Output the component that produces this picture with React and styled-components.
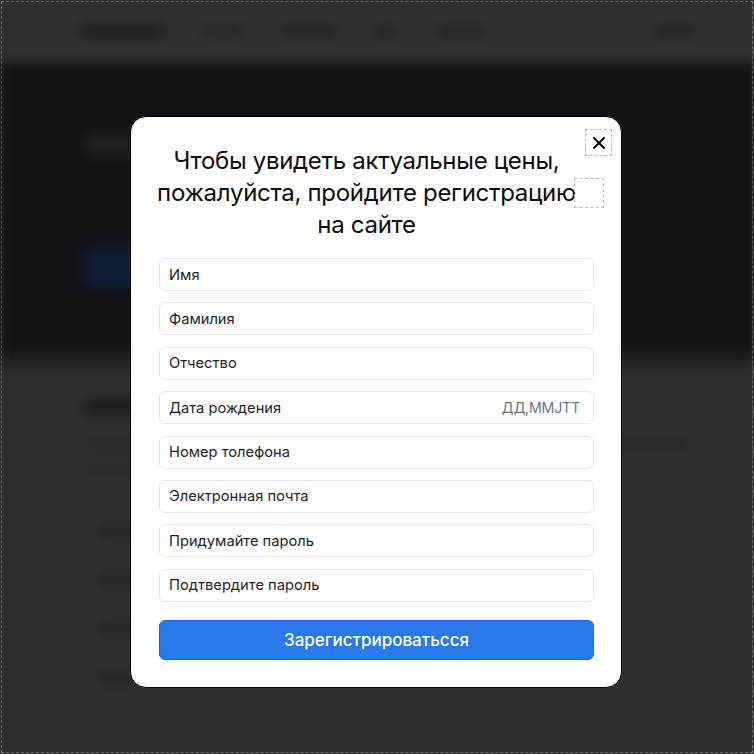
import styled, { createGlobalStyle } from "styled-components";
import { X } from "lucide-react";

const GlobalStyle = createGlobalStyle`
  html, body {
    margin: 0;
    padding: 0;
    background: #2e2e2e;
  }
  * {
    box-sizing: border-box;
  }
`;

const Screen = styled.div`
  position: relative;
  width: 754px;
  height: 754px;
  overflow: hidden;
  font-family: Inter, "Noto Sans", sans-serif;
  background: #2e2e2e;
  outline: 1px dashed #b8b8b8;
  outline-offset: -2px;
`;

const Page = styled.div`
  display: flex;
  flex-direction: column;
  height: 100%;
  filter: blur(6px);
`;

const TopBar = styled.header`
  height: 62px;
  display: flex;
  align-items: center;
  gap: 38px;
  padding: 0 59px 0 80px;
  background: #303030;
`;

const Bar = styled.div`
  width: ${(p) => p.$w}px;
  height: ${(p) => p.$h || 10}px;
  background: ${(p) => p.$c || "#1e1e1e"};
  border-radius: 3px;
  margin-left: ${(p) => (p.$push ? "auto" : "0")};
  margin-top: ${(p) => p.$mt || 0}px;
`;

const Hero = styled.section`
  height: 288px;
  display: flex;
  flex-direction: column;
  gap: 22px;
  padding: 72px 85px 0;
  background: #101216;
`;

const Content = styled.section`
  flex: 1;
  display: flex;
  flex-direction: column;
  padding: 50px 64px 0 85px;
  background: linear-gradient(#141518 0, #2e2e2e 24px);
`;

const Lines = styled.div`
  display: flex;
  flex-direction: column;
  gap: 12px;
  margin: 26px 0 54px;
`;

const List = styled.div`
  display: flex;
  flex-direction: column;
  gap: 39px;
  padding-left: 15px;
`;

const Overlay = styled.div`
  position: absolute;
  inset: 0;
  display: flex;
  justify-content: center;
  align-items: flex-start;
  padding: 116px 2px 0 0;
`;

const Modal = styled.div`
  position: relative;
  width: 492px;
  height: 572px;
  padding: 28px 27px 27px 28px;
  background: #ffffff;
  border: 1px solid #000;
  border-radius: 16px;
  display: flex;
  flex-direction: column;
`;

const Title = styled.h2`
  margin: 0 10px 17px -10px;
  font-size: 24px;
  line-height: 32px;
  font-weight: 400;
  color: #0c0c0c;
  text-align: center;
  letter-spacing: -0.3px;
  white-space: nowrap;
`;

const DashedBox = styled.div`
  position: absolute;
  top: ${(p) => p.$top}px;
  right: ${(p) => p.$right}px;
  width: ${(p) => p.$size}px;
  height: ${(p) => p.$size}px;
  border: 1px dashed #b9b9b9;
  display: flex;
  align-items: center;
  justify-content: center;
  color: #111;
`;

const Fields = styled.div`
  display: flex;
  flex-direction: column;
  gap: 11.4px;
`;

const Field = styled.div`
  height: 33px;
  display: flex;
  align-items: center;
  justify-content: space-between;
  padding: 0 13px 0 9px;
  border: 1px solid #dfe5ef;
  border-radius: 6px;
  background: #fff;
  font-size: 14.7px;
  color: #1f2328;
`;

const Hint = styled.span`
  color: #6b7586;
  font-size: 14.2px;
  letter-spacing: -0.2px;
`;

const Submit = styled.button`
  margin-top: 18px;
  height: 42px;
  width: 100%;
  border: 1px solid #1f69d6;
  border-radius: 6px;
  background: #2a79e8;
  color: #fff;
  font-family: inherit;
  font-size: 17px;
  font-weight: 500;
  cursor: pointer;
`;

const fields = [
  { label: "Имя" },
  { label: "Фамилия" },
  { label: "Отчество" },
  { label: "Дата рождения", hint: "ДД,MMJTT" },
  { label: "Номер толефона" },
  { label: "Электронная почта" },
  { label: "Придумайте пароль" },
  { label: "Подтвердите пароль" },
];

export default function App() {
  return (
    <Screen>
      <GlobalStyle />
      <Page>
        <TopBar>
          <Bar $w={85} $h={12} $c="#1c1c1c" />
          <Bar $w={40} $c="#262626" />
          <Bar $w={55} $c="#222" />
          <Bar $w={25} $c="#242424" />
          <Bar $w={50} $c="#242424" />
          <Bar $w={40} $c="#222" $push />
        </TopBar>
        <Hero>
          <Bar $w={55} $h={22} $c="#1f2124" />
          <Bar $w={200} $h={10} $c="#131518" />
          <Bar $w={130} $h={38} $c="#0e1d33" $mt={38} />
        </Hero>
        <Content>
          <Bar $w={60} $h={14} $c="#1a1a1a" />
          <Lines>
            <Bar $w={605} $h={10} $c="#282828" />
            <Bar $w={300} $h={10} $c="#292929" />
          </Lines>
          <List>
            <Bar $w={35} $c="#242424" />
            <Bar $w={35} $c="#242424" />
            <Bar $w={35} $c="#242424" />
            <Bar $w={35} $c="#242424" />
            <Bar $w={280} $c="#2a2a2a" $mt={8} />
          </List>
        </Content>
      </Page>
      <Overlay>
        <Modal>
          <DashedBox $top={12} $right={9} $size={27}>
            <X size={20} strokeWidth={2.6} />
          </DashedBox>
          <DashedBox $top={61} $right={17} $size={30} />
          <Title>
            Чтобы увидеть актуальные цены,
            <br />
            пожалуйста, пройдите регистрацию
            <br />
            на сайте
          </Title>
          <Fields>
            {fields.map((f) => (
              <Field key={f.label}>
                <span>{f.label}</span>
                {f.hint && <Hint>{f.hint}</Hint>}
              </Field>
            ))}
          </Fields>
          <Submit>Зарегистрироватьсся</Submit>
        </Modal>
      </Overlay>
    </Screen>
  );
}
